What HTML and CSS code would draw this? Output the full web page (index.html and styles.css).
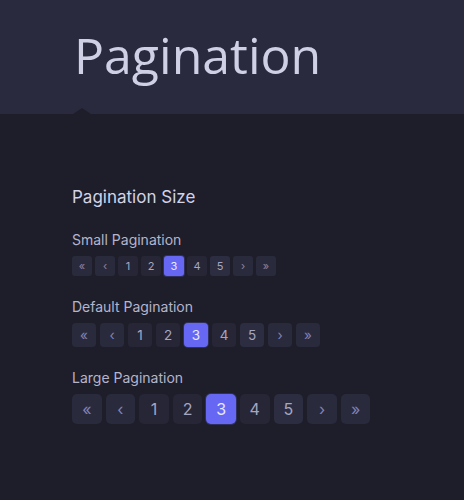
FILE: index.html
```html
<!DOCTYPE html>
<html>
<head>
<meta charset="utf-8">
<link rel="stylesheet" href="styles.css">
</head>
<body>
<header class="hero">
  <h1 class="hero-title">Pagination</h1>
  <span class="notch"></span>
</header>
<main class="content">
  <h2 class="section-title">Pagination Size</h2>

  <h3 class="label">Small Pagination</h3>
  <nav class="pager pager-sm">
    <a class="pg pg-nav">&laquo;</a><a class="pg pg-nav">&lsaquo;</a><a class="pg">1</a><a class="pg">2</a><a class="pg active">3</a><a class="pg">4</a><a class="pg pg-hover">5</a><a class="pg pg-nav">&rsaquo;</a><a class="pg pg-nav">&raquo;</a>
  </nav>

  <h3 class="label">Default Pagination</h3>
  <nav class="pager pager-md">
    <a class="pg pg-nav">&laquo;</a><a class="pg pg-nav">&lsaquo;</a><a class="pg">1</a><a class="pg">2</a><a class="pg active">3</a><a class="pg">4</a><a class="pg pg-hover">5</a><a class="pg pg-nav">&rsaquo;</a><a class="pg pg-nav">&raquo;</a>
  </nav>

  <h3 class="label">Large Pagination</h3>
  <nav class="pager pager-lg">
    <a class="pg pg-nav">&laquo;</a><a class="pg pg-nav">&lsaquo;</a><a class="pg">1</a><a class="pg">2</a><a class="pg active">3</a><a class="pg">4</a><a class="pg pg-hover">5</a><a class="pg pg-nav">&rsaquo;</a><a class="pg pg-nav">&raquo;</a>
  </nav>
</main>
</body>
</html>
```

FILE: styles.css
```css
html, body {
  margin: 0;
  padding: 0;
  background: #1e1e2b;
  height: 100%;
}
body {
  font-family: Inter, "Noto Sans", sans-serif;
  color: #c4c5dc;
}
.hero {
  position: relative;
  height: 114px;
  background: #2a2a3e;
  padding-left: 74px;
  box-sizing: border-box;
}
.hero-title {
  margin: 0;
  padding-top: 19px;
  font-family: "Open Sans", sans-serif;
  font-weight: 400;
  font-size: 50px;
  line-height: 72px;
  color: #cfd0e6;
  letter-spacing: 0;
}
.notch {
  position: absolute;
  left: 73px;
  bottom: 0;
  width: 0;
  height: 0;
  border-left: 9px solid transparent;
  border-right: 9px solid transparent;
  border-bottom: 6px solid #1e1e2b;
}
.content {
  padding: 71px 0 0 72px;
}
.section-title {
  margin: 0 0 21px;
  font-size: 17px;
  font-weight: 400;
  line-height: 24px;
  color: #d2d3e8;
}
.label {
  margin: 0 0 6px;
  font-size: 14px;
  font-weight: 400;
  line-height: 20px;
  color: #b4b5cc;
}
.pager {
  display: flex;
  margin-bottom: 21px;
}
.pg {
  display: flex;
  align-items: center;
  justify-content: center;
  background: #262637;
  color: #a5a7c2;
  border-radius: 4px;
}
.pg-nav {
  background: #2a2a3d;
  color: #8082b8;
}
.pg-hover {
  background: #2c2d41;
}
.pg.active {
  background: #6668f4;
  color: #e8e8ff;
  box-shadow: 0 0 0 1px rgba(102,104,244,0.25);
}
.pager-sm { gap: 3px; }
.pager-sm .pg {
  width: 20px;
  height: 20px;
  font-size: 11px;
  border-radius: 3px;
}
.pager-md { gap: 4px; }
.pager-md .pg {
  width: 24px;
  height: 24px;
  font-size: 13.5px;
  border-radius: 4px;
}
.pager-lg { gap: 4px; }
.pager-lg .pg {
  width: 29.6px;
  height: 29.6px;
  font-size: 16px;
  border-radius: 5px;
}
```
